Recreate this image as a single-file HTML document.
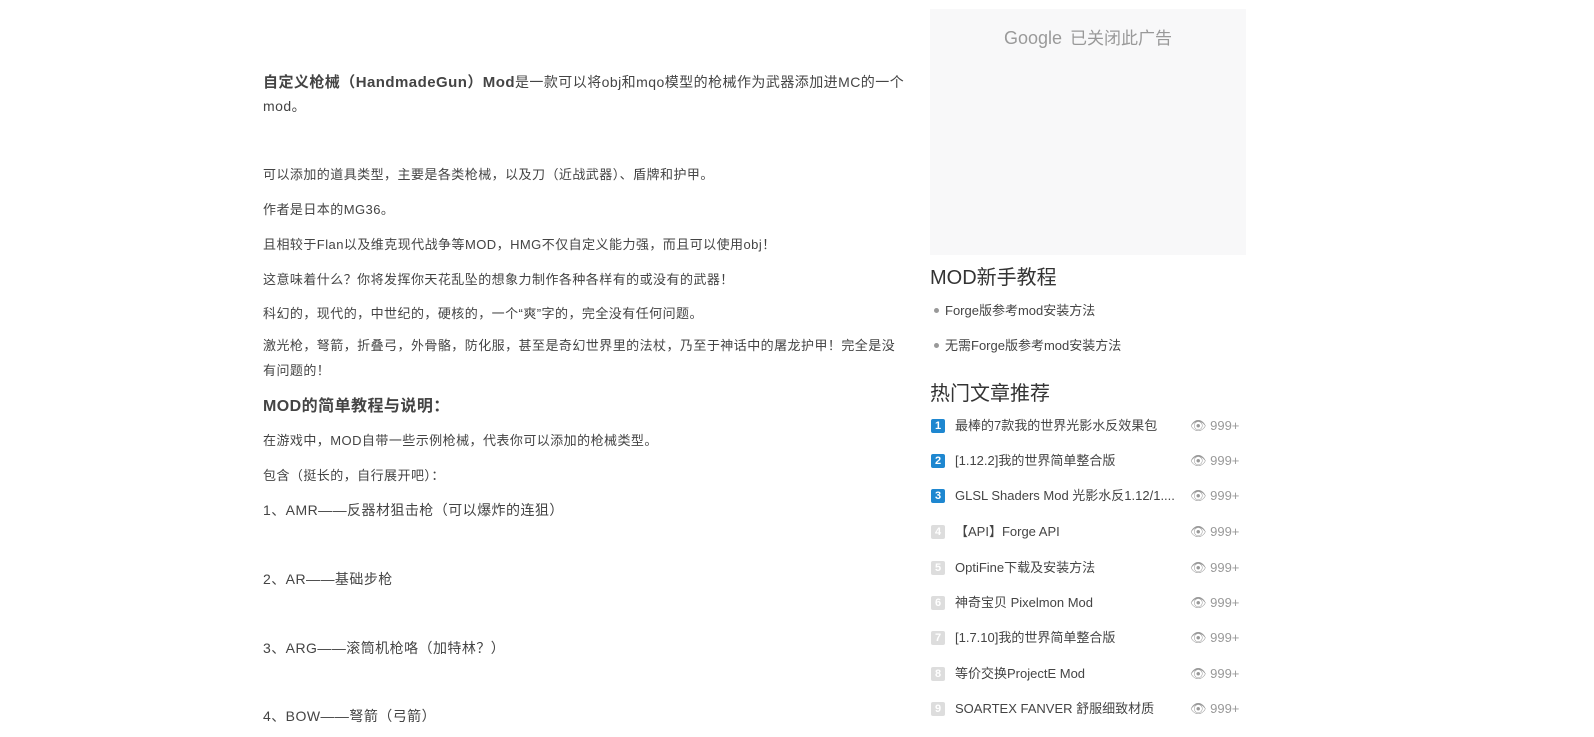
<!DOCTYPE html>
<html><head><meta charset="utf-8"><style>
body{margin:0;width:1594px;height:737px;overflow:hidden;background:#fff;font-family:"Liberation Sans","Noto Sans CJK SC",sans-serif;color:#444;position:relative}
.t{position:absolute;left:263px;font-size:13px;white-space:nowrap;line-height:18px;letter-spacing:0.45px}
.ad{position:absolute;left:930px;top:9px;width:316px;height:246px;background:#f8f8f9}
.ad div{text-align:center;margin-top:15px;color:#999;font-size:17px}
.ad b{font-weight:normal;font-size:18px;color:#9a9a9a;margin-right:8px}
.h{position:absolute;left:930px;font-size:20px;color:#333;white-space:nowrap;line-height:26px}
.b{position:absolute;left:934px;font-size:13px;color:#444;white-space:nowrap;line-height:18px}
.b:before{content:"";display:inline-block;width:5px;height:5px;border-radius:50%;background:#999;margin-right:6px;vertical-align:2px}
.li{position:absolute;left:931px;width:310px;height:18px;font-size:13px;color:#444;line-height:18px;white-space:nowrap}
.n{position:absolute;left:0;top:2px;width:14px;height:14px;border-radius:2px;background:#ddd;color:#fff;font-size:11px;font-weight:bold;text-align:center;line-height:14px}
.n.a{background:#1e87d0}
.li .x{position:absolute;left:24px}
.li .v{position:absolute;left:259px;color:#999}
</style></head><body>
<div class="t" style="top:73px;font-size:15px;color:#444"><b>自定义枪械（HandmadeGun）Mod</b><span style="font-size:14px">是一款可以将obj和mqo模型的枪械作为武器添加进MC的一个</span></div>
<div class="t" style="top:97px;font-size:14px">mod。</div>
<div class="t" style="top:166px">可以添加的道具类型，主要是各类枪械，以及刀（近战武器）、盾牌和护甲。</div>
<div class="t" style="top:201px">作者是日本的MG36。</div>
<div class="t" style="top:236px">且相较于Flan以及维克现代战争等MOD，HMG不仅自定义能力强，而且可以使用obj！</div>
<div class="t" style="top:271px">这意味着什么？你将发挥你天花乱坠的想象力制作各种各样有的或没有的武器！</div>
<div class="t" style="top:305px">科幻的，现代的，中世纪的，硬核的，一个“爽”字的，完全没有任何问题。</div>
<div class="t" style="top:337px">激光枪，弩箭，折叠弓，外骨骼，防化服，甚至是奇幻世界里的法杖，乃至于神话中的屠龙护甲！完全是没</div>
<div class="t" style="top:362px">有问题的！</div>
<div class="t" style="top:397px;font-size:16px;font-weight:bold;line-height:20px">MOD的简单教程与说明：</div>
<div class="t" style="top:432px">在游戏中，MOD自带一些示例枪械，代表你可以添加的枪械类型。</div>
<div class="t" style="top:467px">包含（挺长的，自行展开吧）：</div>
<div class="t" style="top:501px;font-size:14px">1、AMR——反器材狙击枪（可以爆炸的连狙）</div>
<div class="t" style="top:570px;font-size:14px">2、AR——基础步枪</div>
<div class="t" style="top:639px;font-size:14px">3、ARG——滚筒机枪咯（加特林？）</div>
<div class="t" style="top:707px;font-size:14px">4、BOW——弩箭（弓箭）</div>

<div class="ad"><div><b>Google</b>已关闭此广告</div></div>
<div class="h" style="top:265px">MOD新手教程</div>
<div class="b" style="top:302px">Forge版参考mod安装方法</div>
<div class="b" style="top:337px">无需Forge版参考mod安装方法</div>
<div class="h" style="top:381px">热门文章推荐</div>
<div class="li" style="top:417px"><span class="n a">1</span><span class="x">最棒的7款我的世界光影水反效果包</span><span class="v">👁 999+</span></div>
<div class="li" style="top:452px"><span class="n a">2</span><span class="x">[1.12.2]我的世界简单整合版</span><span class="v">👁 999+</span></div>
<div class="li" style="top:487px"><span class="n a">3</span><span class="x">GLSL Shaders Mod 光影水反1.12/1....</span><span class="v">👁 999+</span></div>
<div class="li" style="top:523px"><span class="n">4</span><span class="x">【API】Forge API</span><span class="v">👁 999+</span></div>
<div class="li" style="top:559px"><span class="n">5</span><span class="x">OptiFine下载及安装方法</span><span class="v">👁 999+</span></div>
<div class="li" style="top:594px"><span class="n">6</span><span class="x">神奇宝贝 Pixelmon Mod</span><span class="v">👁 999+</span></div>
<div class="li" style="top:629px"><span class="n">7</span><span class="x">[1.7.10]我的世界简单整合版</span><span class="v">👁 999+</span></div>
<div class="li" style="top:665px"><span class="n">8</span><span class="x">等价交换ProjectE Mod</span><span class="v">👁 999+</span></div>
<div class="li" style="top:700px"><span class="n">9</span><span class="x">SOARTEX FANVER 舒服细致材质</span><span class="v">👁 999+</span></div>
</body></html>
